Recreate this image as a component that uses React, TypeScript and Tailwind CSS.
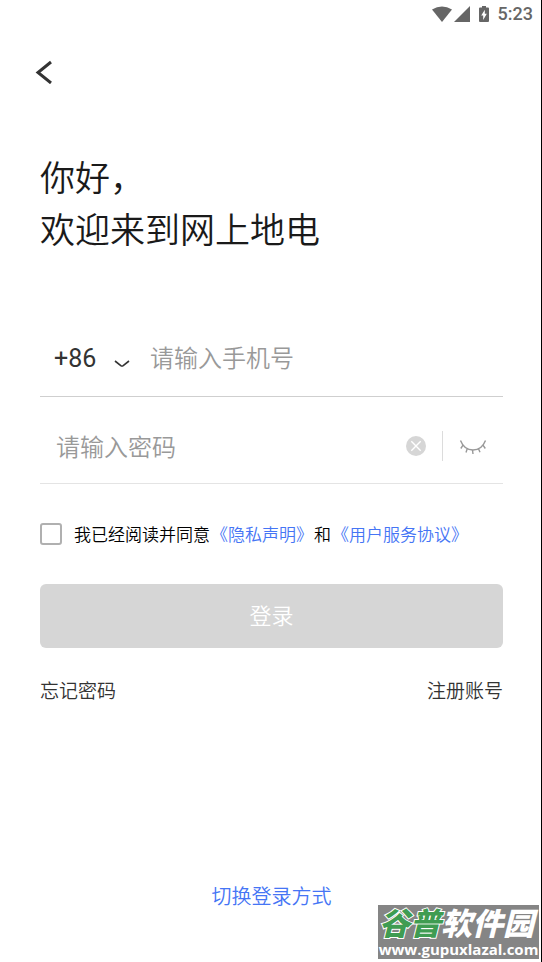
import { useState } from "react";

export default function App() {
  const [phone, setPhone] = useState("");
  const [password, setPassword] = useState("");
  const [visible, setVisible] = useState(false);
  const [agreed, setAgreed] = useState(false);

  return (
    <div className="flex min-h-screen flex-col border-r border-black bg-white font-['Noto_Sans_CJK_SC',sans-serif] font-[350] text-[#1a1a1a]">
      <StatusBar />

      <header className="flex px-8 pt-8">
        <button type="button" aria-label="返回" className="h-6 w-6">
          <svg viewBox="0 0 24 24" className="h-6 w-6" fill="none" stroke="#333" strokeWidth="3">
            <path d="M19 2 6 12.500 19 23" />
          </svg>
        </button>
      </header>

      <main className="flex grow flex-col pr-[38px] pl-10">
        <h1 className="pt-[66px] text-[35px] leading-[52px] font-[350]">
          你好，
          <br />
          欢迎来到网上地电
        </h1>

        <form className="flex flex-col pt-16" onSubmit={(e) => e.preventDefault()}>
          <div className="flex h-[79px] items-center border-b border-[#cfcfcf] pl-3">
            <div className="relative flex w-[98px] items-center pt-1">
              <select
                aria-label="国家区号"
                className="w-full appearance-none bg-transparent pl-[2px] font-[Roboto,sans-serif] text-[25px] font-normal text-[#333] outline-none"
              >
                <option>+86</option>
              </select>
              <svg
                viewBox="0 0 16 8"
                className="pointer-events-none absolute top-6 right-5 h-2 w-4"
                fill="none"
                stroke="#333"
                strokeWidth="1.6"
              >
                <path d="M1 1 6.800 5.600Q8 6.500 9.200 5.600L15 1" />
              </svg>
            </div>
            <input
              type="tel"
              aria-label="手机号"
              placeholder="请输入手机号"
              value={phone}
              onChange={(e) => setPhone(e.target.value)}
              className="min-w-0 grow text-2xl outline-none placeholder:text-[#999]"
            />
          </div>

          <div className="flex h-[87px] items-center border-b border-[#e4e4e4] px-4 pt-3">
            <input
              type={visible ? "text" : "password"}
              aria-label="密码"
              placeholder="请输入密码"
              value={password}
              onChange={(e) => setPassword(e.target.value)}
              className="min-w-0 grow text-2xl outline-none placeholder:text-[#999]"
            />
            <button type="button" aria-label="清除" onClick={() => setPassword("")}>
              <svg viewBox="0 0 20 20" className="h-5 w-5" fill="none" stroke="#fff" strokeWidth="1.4">
                <circle cx="10" cy="10" r="10" fill="#d6d6d6" stroke="none" />
                <path d="m5.300 5.300 9.400 9.400m0-9.400-9.400 9.400" />
              </svg>
            </button>
            <span className="mx-4 h-[30px] w-px bg-[#dcdcdc]" />
            <button type="button" aria-label="显示密码" onClick={() => setVisible(!visible)}>
              <svg viewBox="0 0 28 16" className="h-4 w-7" fill="none" stroke="#999" strokeWidth="1.4">
                <path d="M1.500 2.500C4 9 8.500 12 14 12S24 9 26.500 2.500" />
                <path d="M4 7.200 1.800 10.500M8.200 10.700 7 14.500M13.500 12 14 16M19.500 10.700 21 14.300M24 7.200 26.300 10.500" />
              </svg>
            </button>
          </div>

          <div className="flex items-center pt-[37px] text-[17px] leading-[26px] text-black">
            <input
              id="agree"
              type="checkbox"
              checked={agreed}
              onChange={(e) => setAgreed(e.target.checked)}
              className="mr-3 h-[22px] w-[22px] shrink-0 appearance-none rounded-[3px] border-2 border-[#b0b0b0] checked:bg-[#4575f5]"
            />
            <div className="flex gap-px whitespace-nowrap">
              <label htmlFor="agree">我已经阅读并同意</label>
              <a href="#privacy" className="text-[#4575f5]">《隐私声明》</a>
              <span>和</span>
              <a href="#terms" className="text-[#4575f5]">《用户服务协议》</a>
            </div>
          </div>

          <button type="submit" className="mt-[37px] h-16 rounded-md bg-[#d6d6d6] pb-1 text-[22px] text-white">
            登录
          </button>
        </form>

        <div className="flex justify-between pt-7 text-[19px] leading-7 text-[#333]">
          <a href="#forgot">忘记密码</a>
          <a href="#register">注册账号</a>
        </div>

        <a href="#switch" className="mt-auto self-center pb-[52px] text-xl leading-7 text-[#4575f5]">
          切换登录方式
        </a>
      </main>

      <Watermark />
    </div>
  );
}

function StatusBar() {
  return (
    <div className="flex h-7 items-center justify-end pr-2 text-[#666]">
      <svg viewBox="0 0 20 16" className="h-4 w-5" fill="currentColor">
        <path d="M0 3.500Q10-2.500 20 3.500L10 16Z" />
      </svg>
      <svg viewBox="0 0 16 16" className="ml-[2px] h-4 w-4" fill="currentColor">
        <path d="M16 0v16H0Z" />
      </svg>
      <svg viewBox="0 0 12 16" className="ml-2 h-4 w-3" fill="currentColor">
        <path d="M4 0h4v1.500h2q1 0 1 1V15q0 1-1 1H2q-1 0-1-1V2.500q0-1 1-1h2Z" />
        <path d="M6.800 3.800v4h2L5.200 14v-4.500h-2Z" fill="#fff" />
      </svg>
      <span className="ml-2 font-[Roboto,sans-serif] text-lg leading-7 font-medium">5:23</span>
    </div>
  );
}

function Watermark() {
  return (
    <div className="fixed right-[3px] bottom-[3px] flex h-[54px] w-[161px] flex-col items-center bg-[#858585] whitespace-nowrap text-white">
      <div className="flex pt-1 pr-1 font-['Liberation_Sans','Noto_Sans_CJK_SC',sans-serif] text-[31px] leading-8 font-black italic">
        <span className="text-[#3f9c52] [-webkit-text-stroke:2px_white] [paint-order:stroke_fill]">谷普</span>
        <span>软件园</span>
      </div>
      <div className="font-['Open_Sans',sans-serif] text-[15px] leading-4 font-bold">www.gupuxlazal.com</div>
    </div>
  );
}
